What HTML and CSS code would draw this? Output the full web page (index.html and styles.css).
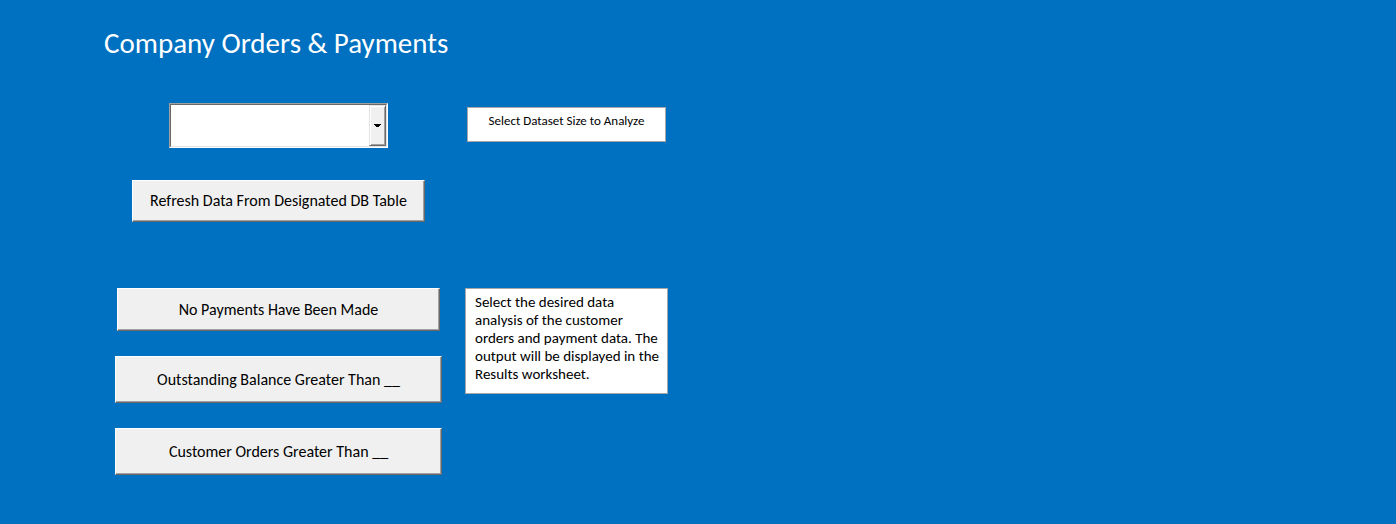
FILE: index.html
```html
<!DOCTYPE html>
<html lang="en">
<head>
<meta charset="utf-8">
<title>Company Orders &amp; Payments</title>
<link rel="stylesheet" href="styles.css">
</head>
<body>
<main class="panel">
  <h1 class="title">Company Orders &amp; Payments</h1>
  <section class="row row-source">
    <div class="controls source-controls">
      <div class="combo">
        <select class="combo-select" id="dataset" aria-labelledby="dataset-label"><option></option></select>
        <span class="combo-button" aria-hidden="true">
          <svg width="7" height="3" viewBox="0 0 7 3" shape-rendering="crispEdges"><path d="M0 0h7v1h-1v1h-1v1h-3v-1h-1v-1h-1z"/></svg>
        </span>
      </div>
      <button class="button button-refresh" type="button">Refresh Data From Designated DB Table</button>
    </div>
    <label class="note note-small" id="dataset-label" for="dataset">Select Dataset Size to Analyze</label>
  </section>
  <section class="row">
    <div class="controls">
      <button class="button button-short" type="button">No Payments Have Been Made</button>
      <button class="button" type="button">Outstanding Balance Greater Than __</button>
      <button class="button" type="button">Customer Orders Greater Than __</button>
    </div>
    <p class="note">Select the desired data analysis of the customer orders and payment data. The output will be displayed in the Results worksheet.</p>
  </section>
</main>
</body>
</html>
```
FILE: styles.css
```css
* {
  box-sizing: border-box;
}

body {
  margin: 0;
  background: #0070c0;
  color: #000;
  font-family: Carlito, Calibri, Lato, sans-serif;
}

.panel {
  padding: 26px 24px 24px 104px;
}

.title {
  margin: 0 0 42px;
  color: #fff;
  font-size: 29px;
  font-weight: 400;
  line-height: 35px;
}

.row {
  display: grid;
  grid-template-columns: minmax(0, 327px) minmax(0, 203px);
  column-gap: 23px;
  align-items: start;
  padding-left: 11px;
}

.row-source {
  margin-bottom: 66px;
}

.controls {
  display: flex;
  flex-direction: column;
  align-items: center;
  gap: 25px;
}

.source-controls {
  gap: 32px;
}

.combo {
  position: relative;
  width: 219px;
  max-width: 100%;
  height: 45px;
  border: 1px solid;
  border-color: #a0a0a0 #fff #fff #a0a0a0;
}

.combo-select {
  display: block;
  width: 100%;
  height: 100%;
  padding: 0 20px 0 4px;
  appearance: none;
  border: 1px solid;
  border-color: #696969 #e3e3e3 #e3e3e3 #696969;
  border-radius: 0;
  background: #fff;
  font: inherit;
  font-size: 15px;
}

.combo-button {
  position: absolute;
  top: 1px;
  right: 1px;
  bottom: 1px;
  display: flex;
  align-items: center;
  justify-content: center;
  width: 17px;
  border: 1px solid;
  border-color: #e3e3e3 #696969 #696969 #e3e3e3;
  background: #f0f0f0;
  box-shadow: inset 1px 1px #fff, inset -1px -1px #a0a0a0;
  pointer-events: none;
}

.button {
  width: 100%;
  min-height: 47px;
  padding: 4px 8px;
  border: 1px solid;
  border-color: #fff #696969 #696969 #fff;
  border-radius: 0;
  background: #f0f0f0;
  box-shadow: inset -1px -1px #a0a0a0;
  color: #000;
  font: inherit;
  font-size: 16px;
  line-height: 20px;
}

.button-refresh {
  width: 293px;
  min-height: 42px;
}

.button-short {
  width: 323px;
  min-height: 43px;
}

.note {
  margin: 0;
  padding: 4px 8px 10px 9px;
  border: 1px solid #a6a6a6;
  background: #fff;
  font-size: 15px;
  line-height: 18px;
}

.note-small {
  margin: 4px 2px 0;
  min-height: 35px;
  padding: 4px;
  font-size: 13px;
  text-align: center;
}
```
